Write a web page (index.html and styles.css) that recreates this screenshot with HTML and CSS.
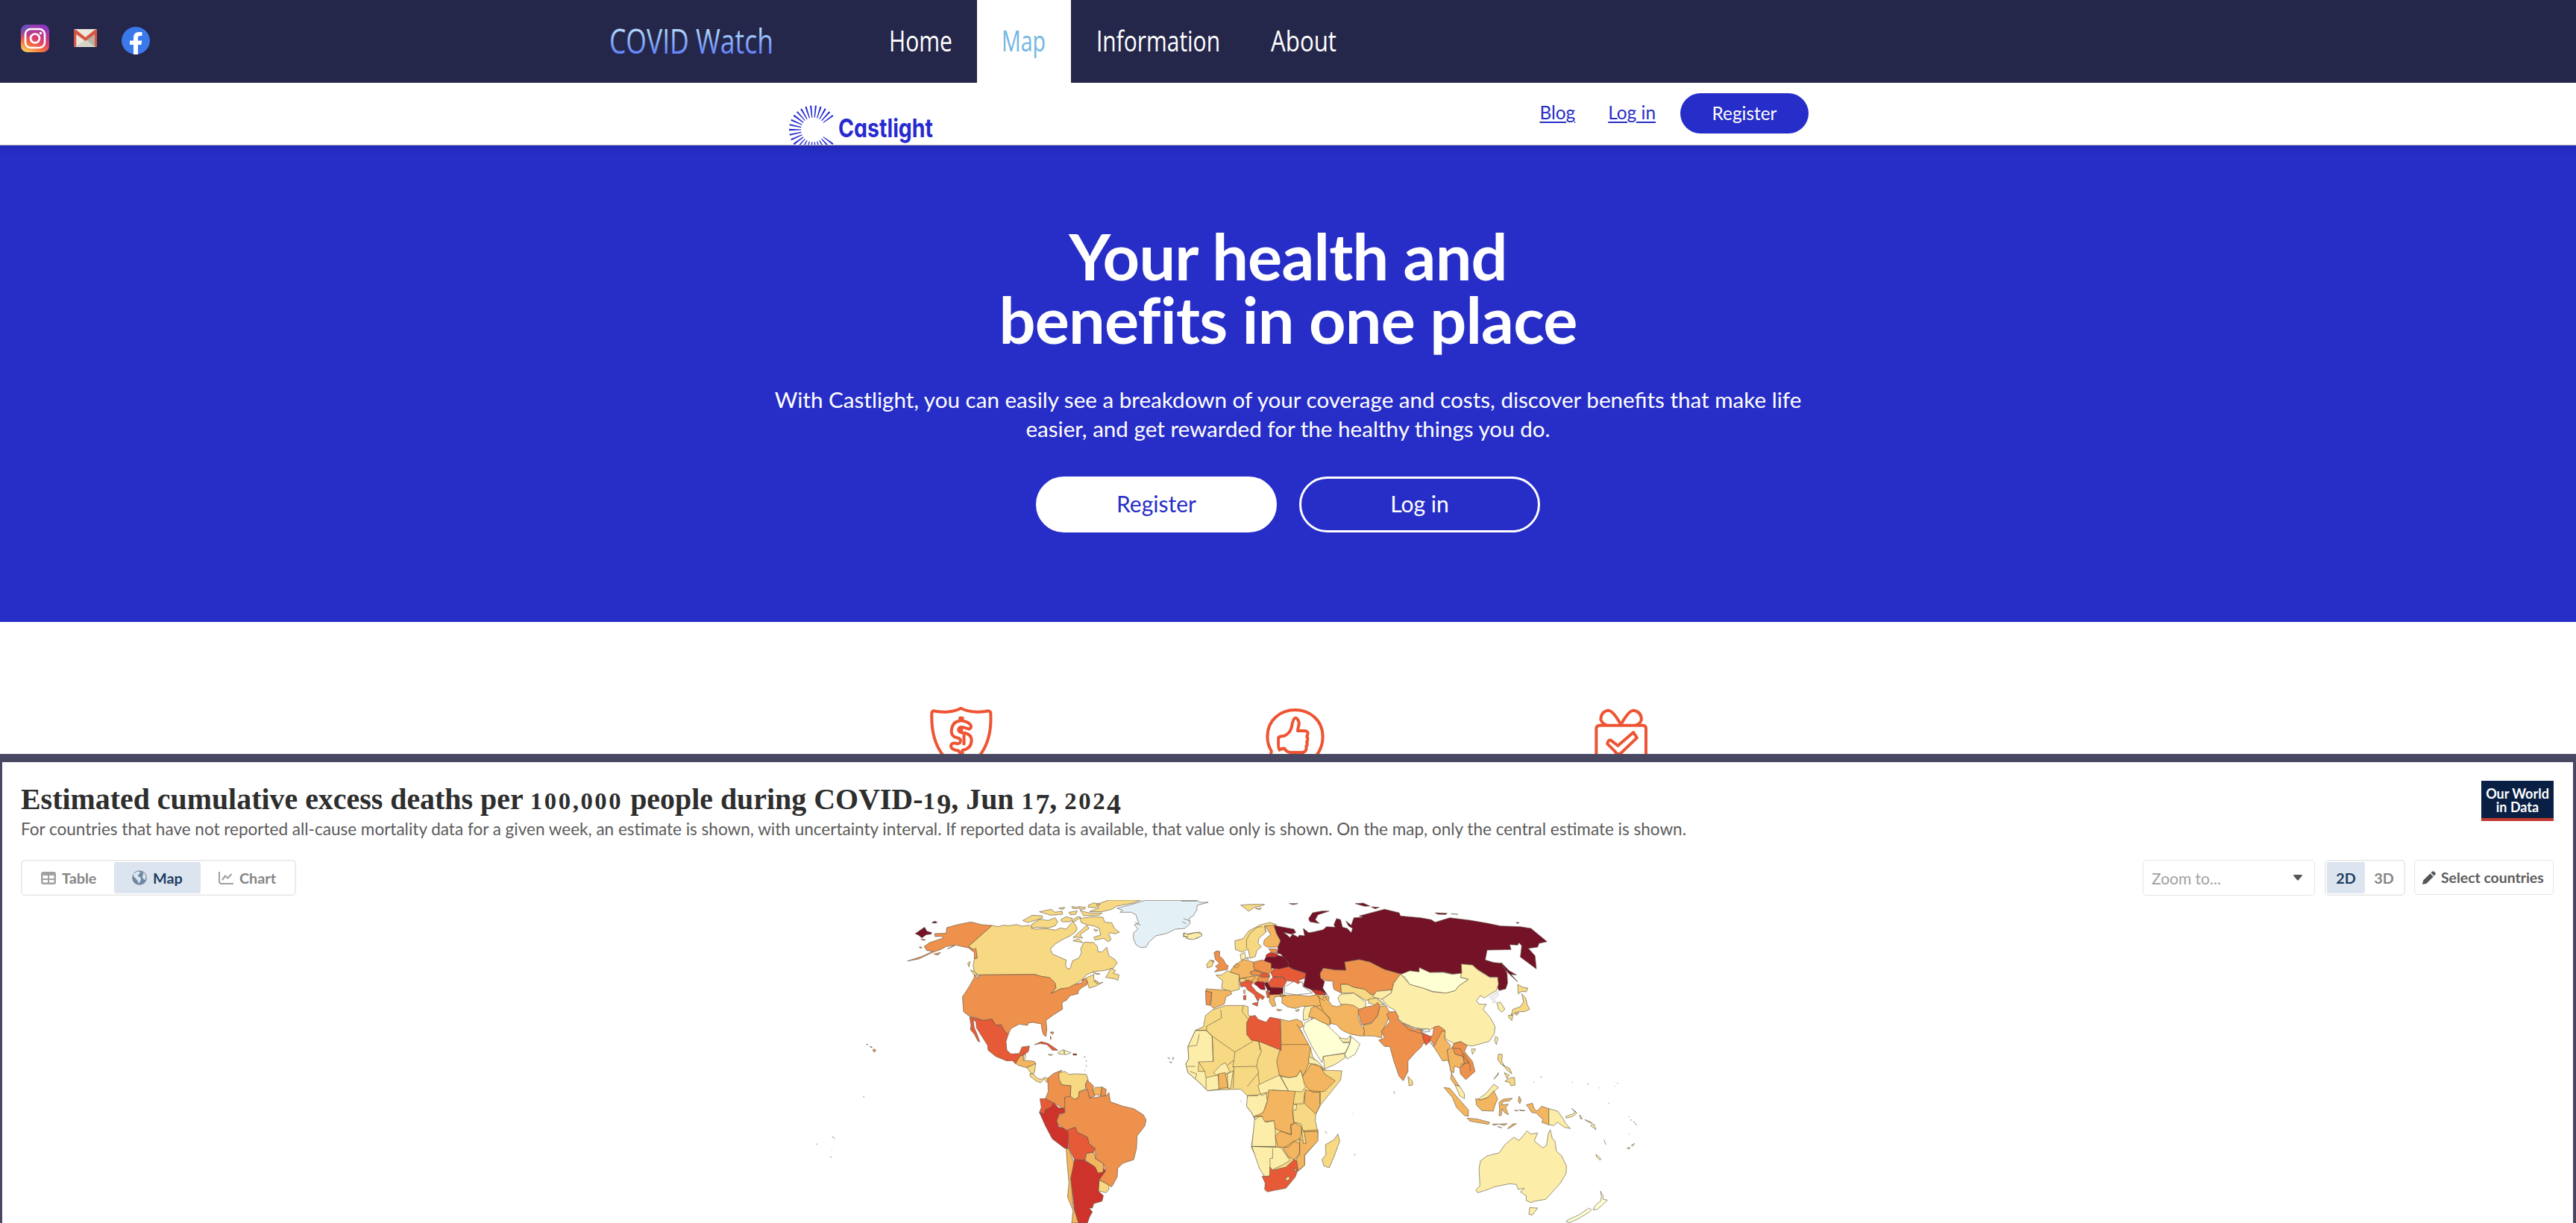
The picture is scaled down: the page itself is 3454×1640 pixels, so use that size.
FILE: index.html
```html
<!DOCTYPE html>
<html lang="en">
<head>
<meta charset="utf-8">
<title>COVID Watch</title>
<link rel="stylesheet" href="styles.css">
</head>
<body>
<header class="topbar">
  <div class="social">
    <svg class="ig" viewBox="0 0 38 37">
      <defs>
        <linearGradient id="igBase" x1="0.2" y1="1" x2="0.7" y2="0"><stop offset="0" stop-color="#fbd45f"/><stop offset="0.25" stop-color="#f7703d"/><stop offset="0.55" stop-color="#d93a72"/><stop offset="1" stop-color="#8a38c4"/></linearGradient>
        <radialGradient id="igBlue" cx="0" cy="0" r="0.55"><stop offset="0" stop-color="#3f62d8"/><stop offset="1" stop-color="#5a48d0" stop-opacity="0"/></radialGradient>
      </defs>
      <rect width="38" height="37" rx="8.5" fill="url(#igBase)"/><rect width="38" height="37" rx="8.5" fill="url(#igBlue)"/>
      <rect x="6" y="6" width="26" height="25" rx="7" fill="none" stroke="#fff" stroke-width="2.6"/>
      <circle cx="19" cy="18.5" r="6" fill="none" stroke="#fff" stroke-width="2.7"/><circle cx="26.5" cy="11.5" r="1.8" fill="#fff"/>
    </svg>
    <svg class="gm" viewBox="0 0 31 24">
      <rect width="31" height="24" rx="2" fill="#ebe8dc"/>
      <path d="M15.500 14L28 23H3Z" fill="#d5d3c5"/><path d="M16 14L28 4V23.500Z" fill="#b6b4a5"/>
      <path d="M0 2Q0 0 3 1L15.500 11 28 1Q31 0 31 2V22Q31 23.500 28 23.500V7L15.500 16 3.200 7V23.500Q0 23.500 0 22Z" fill="#d65547"/>
    </svg>
    <svg class="fb" viewBox="0 0 38 37">
      <ellipse cx="19" cy="18.500" rx="19" ry="18.500" fill="#3b78ea"/>
      <path d="M16 37V24H11V18.500H16V15Q16 7 23 7H27.500V12H24.500Q22 12 22 15V18.500H27.300L26.400 24H22V37Z" fill="#fff"/>
    </svg>
  </div>
  <svg class="brand" width="230" height="80" viewBox="812 15 230 80">
    <defs><linearGradient id="brandInk" x1="0" y1="38" x2="0" y2="73" gradientUnits="userSpaceOnUse"><stop offset="0" stop-color="#b5dcf8"/><stop offset="1" stop-color="#5f80fa"/></linearGradient></defs>
    <text x="817" y="72" textLength="220" lengthAdjust="spacingAndGlyphs" fill="url(#brandInk)">COVID Watch</text>
  </svg>
  <nav class="tabs">
    <a><svg width="90" height="70"><text x="1" y="49" textLength="85" lengthAdjust="spacingAndGlyphs">Home</text></svg></a>
    <a class="on"><svg width="64" height="70"><text x="2" y="49" textLength="59" lengthAdjust="spacingAndGlyphs">Map</text></svg></a>
    <a><svg width="172" height="70"><text x="3" y="49" textLength="166" lengthAdjust="spacingAndGlyphs">Information</text></svg></a>
    <a><svg width="94" height="70"><text x="3" y="49" textLength="88" lengthAdjust="spacingAndGlyphs">About</text></svg></a>
  </nav>
</header>

<section class="castlight">
  <div class="castbar">
    <svg class="castlogo" width="200" height="83" viewBox="1055 111 200 83">
      <clipPath id="burst"><rect x="1055" y="111" width="90" height="83"/></clipPath>
      <g clip-path="url(#burst)"><path class="rays" transform="translate(1090.500 174)" pathLength="292" d="M20.310 13.700A24.500 24.500 0 1 1 20.310 -13.700"/></g>
      <text x="1124" y="183.500" textLength="127" lengthAdjust="spacingAndGlyphs">Castlight</text>
    </svg>
    <div class="castlinks"><a>Blog</a><a>Log in</a><a class="reg">Register</a></div>
  </div>
  <div class="hero">
    <h1>Your health and<br>benefits in one place</h1>
    <p>With Castlight, you can easily see a breakdown of your coverage and costs, discover benefits that make life<br>easier, and get rewarded for the healthy things you do.</p>
    <div class="cta"><a class="solid">Register</a><a>Log in</a></div>
  </div>
  <div class="features">
    <svg viewBox="68 0 126 273" preserveAspectRatio="none"><path d="M131 89Q120 103 100 104Q88 105 76 100Q73 102 73 110Q71 220 98 285H166Q193 220 190 110Q190 102 186 100Q174 105 162 104Q142 103 131 89Z"/><path d="M129 128V140Q113 142 112 182Q112 202 122 207Q129 210 130 216Q131 234 122 231Q112 226 111 240Q111 253 121 258Q129 259 129 272H134V258Q152 252 152 216Q151 194 139 189Q126 188 126 176Q127 161 136 166L147 173Q153 169 150 156Q145 142 134 140V128ZM132 162V188M137 190V238"/></svg>
    <svg viewBox="734 0 120 273" preserveAspectRatio="none"><path d="M745 285L747 262Q739 235 739 205C739 60 849 60 849 205Q849 250 834 285"/><path d="M787 166Q790 128 794 128Q800 128 802 150L799 180H813Q821 182 819 195Q816 204 819 209Q820 218 817 226Q820 235 816 242Q818 262 810 267H784Q776 264 773 251Q768 250 763 257Q760 252 761 207Q765 200 773 200Q784 190 787 166Z"/></svg>
    <svg viewBox="1386 0 110 273" preserveAspectRatio="none"><path d="M1391 285V170Q1391 160 1397 158H1485Q1490 160 1490 170V285M1440 155Q1424 96 1414 98Q1400 104 1400 135Q1404 155 1412 157M1440 155Q1456 96 1466 98Q1481 104 1481 135Q1478 155 1469 157"/><path d="M1413 232Q1415 214 1420 218L1434 240L1465 186L1472 208L1440 270Q1434 280 1428 262Z"/></svg>
  </div>
</section>

<section class="owid">
  <div class="head">
    <div>
      <svg class="title" width="1490" height="46" viewBox="28 1048 1490 46">
        <text x="28" y="1085" textLength="1475" lengthAdjust="spacingAndGlyphs">Estimated cumulative excess deaths per <tspan class="os">100,000</tspan> people during COVID-<tspan class="os">1</tspan><tspan class="osd" dy="6">9</tspan><tspan dy="-6">, Jun </tspan><tspan class="os">1</tspan><tspan class="osd" dy="6">7</tspan><tspan dy="-6">, </tspan><tspan class="os">202</tspan><tspan class="osd" dy="6">4</tspan></text>
      </svg>
      <p class="sub">For countries that have not reported all-cause mortality data for a given week, an estimate is shown, with uncertainty interval. If reported data is available, that value only is shown. On the map, only the central estimate is shown.</p>
    </div>
    <div class="logo">Our World<br>in Data</div>
  </div>
  <div class="controls">
    <div class="seg views">
      <a class="t1"><svg width="20" height="17"><rect width="20" height="17" rx="3" fill="#a1a1a1"/><path d="M2.500 5H9V9H2.500ZM11 5H17.500V9H11ZM2.500 11H9V14.500H2.500ZM11 11H17.500V14.500H11Z" fill="#fff"/></svg>Table</a>
      <a class="t2 on"><svg width="20" height="20"><circle cx="10" cy="10" r="9.800" fill="#6e87a3"/><path d="M2 4.500L7.500 1.500 11 2 10 5 7.500 7 8.500 8 12 10.500 11.500 14 9 18 7.500 14 5 11 2 8ZM14 3L17 4 18.500 8 18 13 15 11.500 13.500 8 15.500 6Z" fill="#dce5ef"/></svg>Map</a>
      <a class="t3"><svg width="20" height="17"><path d="M1 0V13Q1 16 4 16H20" fill="none" stroke="#a1a1a1" stroke-width="2"/><path d="M5 11L9 5.500 12.500 8.500 17.500 3" fill="none" stroke="#a1a1a1" stroke-width="2.200"/></svg>Chart</a>
    </div>
    <div class="right">
      <div class="zoomto"><span>Zoom to...</span><svg width="12" height="8"><path d="M0 1Q0 0 1 0H11Q12 0 12 1L7 7Q6 8 5 7Z" fill="#555"/></svg></div>
      <div class="seg dims"><a class="on">2D</a><a>3D</a></div>
      <div class="pick"><svg width="18" height="18"><path d="M0 18L1.200 12.500 10.500 3.200 14.800 7.500 5.500 16.800ZM11.500 2.200L13 .7Q14.500 -.5 16 1L17 2Q18.500 3.500 17.200 5L15.800 6.500Z" fill="#555"/></svg>Select countries</div>
    </div>
  </div>
  <svg class="map" width="1220" height="433" viewBox="1080 1207 1220 433">
    <!-- Americas -->
    <g transform="translate(1080 1190) scale(.36990 .33333)">
      <path class="c" d="M676 153L700 158 716 152 740 154 765 149 785 156 812 152 830 168 870 165 905 172 925 163 945 168 958 150 970 138 978 150 985 165 978 180 960 195 935 208 905 228 888 248 895 268 920 280 945 292 943 315 950 328 960 325 968 295 990 285 1000 265 998 245 1010 220 1045 222 1058 238 1060 258 1075 260 1092 240 1100 275 1122 290 1130 305 1115 325 1080 335 1045 338 1018 352 1002 372 1025 360 1045 350 1045 368 1062 385 1078 382 1050 398 1028 405 1022 378 1005 370 985 385 955 405 925 408 890 427 908 405 905 385 885 365 855 358 830 350 628 352 612 340 608 315 612 290 620 270 610 250 590 238Z"/>
      <path class="c" d="M788 133L822 112 858 114 860 122 835 132 805 141ZM820 148L850 128 880 133 905 122 915 138 905 155 880 163 835 160 820 165ZM848 98L890 88 905 100 930 95 932 108 890 112ZM918 84L940 80 935 88ZM925 130L945 118 968 125 960 138 930 138ZM955 100L985 95 980 108 960 110ZM965 77L988 80 985 86 968 84ZM995 90L1010 98 1035 103 1075 103 1065 112 1008 114ZM1025 72L1045 62 1068 68 1052 82 1025 80ZM1055 68L1100 51H1215L1190 62 1155 70 1130 75 1110 88 1075 98 1030 97 1062 84ZM990 77L1015 80 1012 88 992 86ZM965 135L985 118 998 120 975 138ZM995 125L1040 118 1078 120 1085 140 1110 142 1120 165 1138 180 1122 187 1105 182 1100 190 1108 210 1098 218 1080 205 1050 212 1045 200 1070 192 1065 165 1045 155 1020 150 1000 142ZM1045 168L1060 172 1052 178ZM970 202L1020 152 1028 165 995 190 1005 205 988 200ZM970 215L990 206 1005 222ZM1088 362L1108 325 1125 335 1115 345 1137 352 1132 374 1122 368 1105 365ZM1042 342L1068 348 1055 350ZM1045 376L1060 378 1058 388ZM598 332L615 340 625 358 612 352ZM588 305L597 298 593 320Z"/>
      <path class="e" d="M612 350L625 368 628 352 830 350 855 358 885 362 905 385 908 405 890 427 925 408 955 403 975 390 1000 385 1005 372 1018 368 1022 378 1020 392 1003 402 990 415 988 428 960 435 945 455 933 460 930 468 932 490 900 512 872 535 875 570 872 600 862 592 855 560 856 550 848 548 825 543 808 545 805 555 775 550 745 568 735 592 720 575 710 552 690 555 675 530 645 535 605 520 590 515 573 500 569 440 590 405 612 362ZM676 153L590 238 610 250 618 245 623 285 612 288 612 262 590 243 568 238 545 232 515 247 540 232 510 238 490 250 460 262 410 288 370 296 420 278 462 257 440 254 430 238 450 222 498 204 495 196 470 198 468 186 510 184 512 162 550 150 600 139 640 150ZM466 268L490 262 480 272ZM412 240L422 240 418 246ZM418 208L435 210 430 214ZM244 653L250 650 256 657 248 662ZM222 630L226 632 224 635ZM234 639L242 643 238 645Z"/>
      <path class="i" d="M398 186L432 160 440 176 458 182 455 188 438 190 422 203 410 192ZM458 142L468 136 478 140 470 144Z"/>
      <path class="n" d="M1130 84L1190 66 1230 52H1420L1430 60 1460 60 1420 72 1418 92 1405 115 1390 125 1395 145 1375 165 1340 168 1310 185 1270 195 1245 220 1235 240 1215 242 1198 230 1188 205 1190 182 1205 168 1192 150 1208 145 1198 110 1180 100 1140 100 1150 92Z"/>
      <path class="l" d="M1362 55H1420M1370 125L1395 135M1380 145L1365 138M1195 140L1215 152"/>
      <path class="b" d="M1370 183L1380 188 1410 182 1430 180 1437 190 1420 205 1390 208 1382 200 1370 198Z"/>
      <path class="f" d="M595 520L645 535 677 530 690 555 708 552 720 575 735 592 727 620 730 655 745 670 775 668 785 642 812 638 808 660 790 675 775 680 772 700 762 710 750 697 730 698 690 680 662 655 660 635 640 600 620 565 618 540 608 533 612 565 622 590 632 622 625 618 612 590 598 572 600 555ZM830 633L855 620 880 628 915 655 895 655 875 632 850 628ZM850 850L872 850 900 867 890 885 870 895 866 912 848 905 855 885Z"/>
      <path class="d" d="M762 708L778 678 790 675 790 695 830 700 835 710 808 722 800 725 770 715ZM1050 805L1075 803 1070 838 1045 832 1042 815ZM945 1052L955 1050 970 1098 975 1115 962 1170 970 1280 990 1350H965L970 1300 950 1245 955 1190 948 1100ZM1018 1070L1045 1065 1052 1092 1080 1110 1080 1145 1060 1150 1050 1125 1015 1098Z"/>
      <path class="b" d="M790 672L798 672 796 690 790 695ZM915 665L935 652 940 672 918 670Z"/>
      <path class="a" d="M938 655L962 665 948 672 940 672Z"/><path class="h" d="M970 669L984 670 982 675 970 674Z"/>
      <path class="c" d="M802 725L835 708 830 745 820 750ZM814 748L828 752 840 768 855 772 868 764 880 770 875 785 866 770 852 786 835 778 814 760ZM880 672L896 672 888 677ZM918 745L940 740 955 752 980 750 1018 752 1025 775 1015 792 1015 812 992 822 990 845 975 853 960 840 962 798 930 795 915 770ZM1065 1178L1100 1195 1100 1215 1090 1228 1060 1220Z"/>
      <path class="e" d="M878 768L900 748 930 735 918 750 920 775 930 795 962 798 960 845 940 845 945 885 935 890 905 870 870 850 880 820ZM1022 775L1045 800 1040 815 1050 838 1030 848 1022 820 1015 795ZM1075 803L1090 812 1088 838 1070 838ZM888 582L900 582 896 592ZM888 598L892 608 888 612Z"/>
      <path class="e" d="M940 845L960 840 975 853 990 845 992 822 1022 812 1030 848 1090 838 1100 825 1105 862 1150 880 1190 890 1225 915 1235 935 1230 960 1202 1000 1200 1050 1190 1095 1150 1110 1132 1130 1130 1165 1110 1205 1065 1175 1088 1140 1080 1110 1052 1092 1050 1050 1028 1032 1022 1005 985 985 978 965 945 978 912 950 910 930 925 912 940 905Z"/>
      <path class="f" d="M945 978L978 965 985 985 1022 1005 1028 1032 1050 1050 1045 1065 1018 1070 1012 1098 975 1095 955 1050 952 1000Z"/>
      <path class="g" d="M848 905L866 912 870 895 890 885 900 867 918 887 938 888 940 905 920 912 910 940 918 962 938 970 952 985 952 1050 940 1050 895 1012 870 960ZM975 1095L1012 1098 1050 1125 1060 1150 1080 1145 1080 1130 1088 1140 1065 1175 1062 1222 1080 1240 1075 1262 1045 1272 1040 1290 1028 1290 1040 1305 1030 1325 1022 1350H990L975 1295 962 1170Z"/>
      <path class="l" d="M1008 680L1016 684M1018 695V702M1016 715L1020 722M1014 735L1010 738M1316 683L1322 690M1333 683V693M1320 702L1330 705M96 1002L107 1010M40 1030L42 1036M208 842L214 844M90 1085H96M96 1056V1058M885 588L894 580"/>
    </g>
    <!-- Europe, Africa, Asia, Oceania -->
    <g transform="translate(1560 1190) scale(.35714 .33333)">
      <path class="c" d="M290 71L335 68 380 68 365 76 345 78 320 96ZM345 84L368 84 360 90ZM268 215L300 205 320 175 365 150 400 141 425 150 410 158 380 155 385 180 358 205 355 225 368 238 350 255 345 278 325 285 318 248 295 260 270 250Z"/>
      <path class="l" d="M312 245L312 210 325 185 352 160 372 158M385 180L380 158"/>
      <path class="d" d="M382 155L415 152 425 185 440 215 430 240 390 240 376 230 378 212 402 190Z"/>
      <path class="e" d="M395 246L425 248 428 265 405 262ZM190 262L200 255 212 258 210 275 225 290 235 310 243 315 240 330 192 340 205 325 195 318 210 305 195 290ZM178 293L190 295 187 302Z"/>
      <path class="b" d="M288 270L305 262 310 285 292 293ZM310 285L320 282 318 290ZM80 182L92 190 120 182 142 184 144 195 110 210 85 205 92 198 76 197Z"/>
      <path class="c" d="M162 310L175 292 188 300 182 318 165 324ZM197 353L218 352 240 335 255 342 285 352 283 375 285 410 250 420 218 405 222 375ZM300 415L307 412 306 428 301 426Z"/>
      <path class="e" d="M158 415L182 422 175 475 160 472Z"/>
      <path class="d" d="M160 408L250 415 257 428 235 440 228 470 198 482 188 487 178 476 182 422 162 418ZM258 325L285 300 300 290 338 300 342 335 325 345 345 362 330 378 285 370 285 352 250 340ZM320 360L362 352 358 378 335 385 305 372 285 380 285 368ZM262 318L275 305 285 312 275 325Z"/>
      <path class="c" d="M285 368L308 366 310 378 290 384Z"/>
      <path class="e" d="M340 300L370 292 405 302 408 340 392 348 345 335 338 318ZM325 340L350 332 375 345 362 355 330 350ZM360 358L400 358 390 380 362 382 352 370Z"/>
      <path class="g" d="M385 272L400 262 428 268 432 280 415 285 385 280ZM555 412L590 415 605 430 572 428Z"/>
      <path class="f" d="M362 352L380 343 400 352 395 360 370 362ZM404 345L415 325 470 318 485 328 535 345 530 365 505 375 525 388 495 400 485 378 460 375 448 358 410 360ZM390 385L412 360 450 360 462 380 450 402 415 405 402 400ZM287 385L318 373 335 380 330 395 350 420 380 440 372 452 362 442 355 460 340 430 315 412 308 398 290 400ZM333 467L355 462 353 478 335 470ZM300 436L310 434 309 452 301 452ZM385 418L395 415 400 440 390 445Z"/>
      <path class="h" d="M340 388L352 378 378 382 382 412 365 410 350 395Z"/>
      <path class="i" d="M378 385L390 382 402 402 450 404 448 428 430 432 400 432 390 412ZM378 295L385 280 420 280 430 273 455 280 468 300 472 318 435 328 405 325 405 305Z"/>
      <path class="c" d="M390 415L400 415 398 425ZM495 495L510 490 505 500Z"/>
      <path class="d" d="M398 432L440 430 440 438 420 440 415 450 422 475 410 480 398 460ZM425 490L445 493 430 497ZM440 425L460 435 440 440ZM445 435L500 432 545 438 582 430 605 430 600 445 615 435 622 440 620 455 632 475 652 480 685 465 720 475 735 490 730 520 740 550 755 575 752 597 740 598 702 590 680 580 665 570 650 552 628 548 612 550 590 540 568 518 555 530 565 490 570 478 520 478 495 487 465 480 445 465Z"/>
      <path class="g" d="M555 412L590 414 610 432 572 430Z"/>
      <path class="l" d="M582 430L590 475 600 500 625 525 628 548M570 478L590 475M572 430L585 445 605 455M605 430L615 455"/>
      <path class="i" d="M415 153L440 158 490 168 497 182 480 188 450 180 465 192 475 202 485 188 505 200 510 192 530 195 525 165 545 182 560 180 600 170 612 158 645 160 640 150 650 125 665 130 672 160 690 165 705 182 710 165 695 155 685 135 705 152 715 122 750 120 735 115 770 105 830 88 885 102 890 115 920 118 965 122 1005 130 1020 140 1075 122 1150 132 1220 145 1265 155 1340 158 1380 165 1408 190 1440 218 1410 225 1405 240 1370 245 1395 275 1400 328 1340 280 1345 235 1335 222 1330 232 1300 230 1305 250 1215 252 1208 292 1240 302 1270 305 1290 345 1292 385 1285 408 1260 415 1250 390 1255 360 1225 360 1180 330 1160 312 1120 308 1120 345 1085 348 1050 340 1000 342 960 340 890 348 830 330 775 300 735 290 680 300 685 333 645 332 600 325 588 345 590 365 605 378 598 405 615 432 590 415 555 412 525 398 530 375 535 345 485 328 470 318 468 300 440 268 428 265 430 240 440 215 425 185ZM545 125L560 102 595 95 622 95 580 110 570 130 585 145 550 138ZM720 65L750 63 775 75 755 76ZM780 78L810 80 795 86ZM1020 102L1065 104 1060 109 1030 108ZM1080 106L1105 108ZM1268 302L1298 335 1325 352 1305 350 1330 380 1300 350 1278 325ZM472 65L505 65 488 69ZM1325 140L1336 142 1328 145Z"/>
      <path class="e" d="M588 345L605 325 645 332 685 333 680 300 735 290 775 300 830 330 890 348 882 370 862 385 865 410 830 415 800 425 780 432 755 410 715 402 690 390 665 390 668 425 640 410 635 385 640 378 610 375 590 365Z"/>
      <path class="w" d="M520 378L505 388 490 378 455 400 455 425 500 432 560 425 525 400Z"/>
      <path class="c" d="M665 390L690 390 715 402 755 410 780 432 812 430 800 445 830 470 800 472 788 468 778 450 760 455 715 425 668 425Z"/>
      <path class="b" d="M665 430L715 425 760 462 758 485 735 490 715 475 690 470 665 470 655 445ZM800 418L858 412 855 425 820 450 785 440ZM530 480L565 475 565 505 545 530 525 535 525 500Z"/>
      <path class="c" d="M770 450L800 445 830 470 800 475 770 465Z"/>
      <path class="b" d="M890 348L925 390 975 405 1010 420 1060 425 1095 415 1110 395 1145 370 1110 360 1120 345 1118 308 1160 312 1180 332 1225 362 1255 362 1258 390 1250 415 1232 425 1205 445 1190 435 1175 455 1185 470 1212 470 1200 490 1228 525 1245 560 1242 590 1222 620 1160 638 1140 635 1115 620 1090 628 1060 610 1050 580 1028 558 1000 572 945 565 900 545 878 525 870 495 845 480 820 450 855 425 865 385ZM1157 650L1172 650 1160 672ZM1247 600L1256 605 1250 632 1243 618ZM1252 465L1265 462 1282 490 1270 502 1258 490Z"/>
      <path class="a" d="M890 350L925 335 960 340 960 322 1000 342 1050 342 1085 350 1118 345 1115 362 1145 370 1110 395 1095 415 1060 425 1010 418 975 405 925 390 905 360Z"/>
      <path class="z" d="M1222 440L1255 418 1258 435 1240 452 1252 460 1238 466 1232 450Z"/>
      <path class="c" d="M1330 390L1350 402 1368 405 1362 420 1345 418 1332 428ZM1345 428L1360 445 1365 470 1375 490 1355 500 1330 500 1305 515 1312 490 1340 480 1352 460ZM1295 515L1312 512 1308 536 1298 525ZM1320 505L1335 505 1325 515Z"/>
      <path class="e" d="M730 495L755 482 790 475 805 463 812 480 805 515 780 545 745 553 738 530Z"/>
      <path class="d" d="M755 582L750 553 780 548 805 515 812 480 835 475 850 505 840 540 820 580 820 605 790 598 752 597Z"/>
      <path class="e" d="M850 500L872 500 882 520 880 530 900 550 945 572 970 572 972 585 1002 605 1012 590 1015 562 1035 557 1058 575 1045 600 1030 630 1018 640 1005 615 972 630 970 640 945 665 918 698 918 740 900 778 885 760 865 700 850 640 830 640 808 615 830 605 818 578 850 540 838 510Z"/>
      <path class="l" d="M897 545L940 565 970 572 968 588 920 572ZM972 585L1000 600"/>
      <path class="n" d="M972 572L995 568 1000 580 978 582Z"/><path class="f" d="M972 586L1005 600 1000 620 1015 642 1000 620 985 635 975 610Z"/>
      <path class="d" d="M1045 578L1058 580 1055 608 1080 638 1065 655 1075 690 1088 720 1082 750 1105 790 1112 800 1095 795 1078 770 1082 740 1068 695 1048 698 1035 675 1015 642 1030 610Z"/>
      <path class="d" d="M1065 655L1090 640 1095 670 1125 680 1130 710 1112 725 1092 720 1090 745 1078 740Z"/>
      <path class="e" d="M1090 628L1115 620 1140 635 1130 660 1160 700 1170 740 1135 773 1115 750 1112 725 1130 710 1125 680 1095 670 1085 645Z"/><path class="l" d="M1115 650L1130 690 1150 710 1152 740M1125 665L1148 705 1115 712M1085 645L1115 650"/>
      <path class="c" d="M918 760L935 780 935 795 922 798Z"/>
      <path class="a" d="M530 545L568 525 612 550 640 580 665 605 675 625 700 625 685 665 600 680 595 705 560 645 525 570ZM700 628L705 600 738 630 720 670 690 690 680 670Z"/>
      <path class="b" d="M600 680L680 668 682 685 645 712 605 730ZM660 605L690 610 702 595 700 622 672 622ZM1095 795L1112 800 1130 830 1130 850 1112 838ZM1180 852L1210 830 1240 792 1258 805 1240 822 1218 845 1190 855Z"/>
      <path class="d" d="M555 485L570 478 600 500 625 530 625 555 590 540 565 525 545 520Z"/>
      <path class="c" d="M158 515L185 492 235 475 300 475 318 480 318 510 328 525 355 615 430 650 552 645 560 680 600 735 670 738 665 775 620 835 590 875 572 912 570 938 580 985 578 1020 530 1080 530 1118 508 1140 400 1140 350 1090 330 1045 345 935 330 905 315 885 315 838 290 812 265 812 200 815 165 818 140 790 92 745 84 710 95 690 92 640 120 575 150 560Z"/>
      <path class="b" d="M120 575L160 575 183 600 187 700 132 702 130 740 155 740 160 765 205 755 210 812 165 818 140 790 92 745 84 710 95 690 92 640ZM188 745L215 715 232 705 250 742 235 750 200 755ZM240 750L262 738 252 808 242 808ZM355 795L435 755 470 820 410 815 368 838 360 820ZM440 760L470 765 500 760 515 735 535 800 520 822 470 820ZM315 838L355 835 385 825 390 860 375 905 345 935 330 905 312 880ZM343 922L375 922 385 945 418 938 422 1045 332 1042ZM332 1042L440 1045 475 1098 450 1115 410 1135 398 1162 378 1162 360 1130ZM483 870L500 875 498 895 483 895ZM545 680L580 700 608 735 575 712 545 708Z"/>
      <path class="f" d="M325 518L345 515 355 530 385 542 400 522 438 530 442 655 360 620 330 615 313 592 312 545Z"/>
      <path class="d" d="M440 530L470 538 500 530 520 540 525 560 510 565 552 645 545 690 545 710 530 745 522 760 515 735 500 760 470 765 435 755 425 700 435 660 442 655ZM555 710L590 720 605 750 645 778 605 820 560 825 530 795 522 760 540 735ZM532 815L588 822 588 875 572 912 530 870ZM395 815L495 820 490 850 485 900 490 950 478 955 480 995 440 980 420 970 415 938 380 942 370 920 340 922 375 905 390 860ZM420 1000L440 980 480 995 478 955 495 948 520 965 515 1010 490 1022 470 1045 430 1045ZM450 1050L490 1020 512 1030 510 1075 490 1095 470 1085ZM518 980L580 975 580 1020 530 1075 530 1118 505 1140 498 1095 512 1070 510 1010 535 1030ZM206 750L232 745 242 805 208 810Z"/>
      <path class="f" d="M370 1162L398 1162 400 1125 410 1138 460 1125 490 1095 500 1100 505 1135 495 1165 460 1210 420 1218 390 1225 380 1215 382 1190Z"/>
      <path class="c" d="M458 1170L470 1162 475 1172 462 1182ZM490 1130L500 1135 495 1145ZM595 1095L610 1075 608 1035 640 1015 655 992 662 1020 640 1085 622 1128 602 1120ZM518 970L528 980 535 1030 525 1030Z"/>
      <path class="l" d="M120 575H162L185 600 268 662 335 620M183 600L187 700M160 560L218 525 215 492M162 575V560M268 662L265 695 240 715M355 617L368 660 355 690 350 720 260 722 265 695M300 475L295 500 318 530M360 620L362 655M442 632H545M265 722L262 808M350 720L358 745 315 800M355 745L360 790M315 838H355M135 590L125 635 92 640M485 900L490 945 515 950 525 982H578M530 825L525 870 490 872M588 822V870M160 765V810M132 702L155 740M90 720H120M120 770L125 750 100 740M500 550L525 590M343 1042H422M410 1050V1090H400V1130M600 735L590 720M435 660L438 655"/>
      <path class="d" d="M1053 805L1075 808 1100 840 1125 870 1145 895 1145 920 1130 918 1100 885 1085 845ZM1140 928L1180 932 1225 945 1220 953 1150 940ZM1172 850L1190 855 1218 845 1240 818 1255 850 1245 875 1238 900 1195 898 1175 875ZM1260 865L1275 852 1310 848 1300 858 1275 862 1270 875 1295 872 1285 885 1295 915 1280 905 1272 890 1268 918 1260 918 1262 890ZM1335 840L1343 855 1338 870 1332 858ZM1318 897H1330V900ZM1335 895L1358 898 1340 898ZM1235 952H1258L1240 957ZM1260 952L1290 950 1280 958ZM1255 962L1270 967ZM1362 875L1385 868 1392 890 1402 900 1420 880 1447 890V955L1420 945 1425 935 1400 908 1382 905 1370 885ZM1292 970L1310 952 1325 950 1300 968Z"/>
      <path class="b" d="M1447 890L1480 900 1500 930 1510 950 1528 970 1505 965 1480 945 1465 958 1447 955ZM1510 922L1540 910 1545 900 1552 908 1535 922 1512 928ZM1532 890L1548 905"/>
      <path class="c" d="M1258 670L1272 672 1270 700 1280 718 1268 712 1255 692ZM1275 715L1300 728 1308 750 1295 740ZM1280 745L1298 755 1290 770ZM1282 780L1305 765 1318 765 1320 795 1305 798 1300 785ZM1240 772L1258 745 1256 755Z"/>
      <path class="b" d="M1452 975L1460 1010 1470 1020 1475 1060 1495 1080 1513 1120 1512 1150 1490 1190 1435 1255 1395 1262 1380 1268 1362 1260 1362 1240 1340 1225 1355 1210 1332 1215 1325 1195 1300 1192 1240 1205 1220 1215 1180 1228 1172 1218 1188 1200 1185 1130 1190 1100 1215 1080 1260 1068 1282 1035 1315 1005 1335 1018 1365 980 1380 992 1405 988 1392 1020 1425 1048 1438 1038 1445 990ZM1375 1288L1405 1290 1385 1318 1372 1315Z"/>
      <path class="l" d="M605 980L615 990M15 685L22 690M36 683V693M22 702L30 706M718 1072V1078M288 858L292 862M866 820V830M1390 784H1392M1418 762V764M710 910H712M1535 784H1537"/>
    </g>
    <!-- Pacific -->
    <g transform="translate(1900 1190) scale(.33333)">
      <path class="a" d="M738 1222L748 1240 748 1255 766 1258 745 1278 725 1295 708 1297 718 1278 738 1262 742 1245ZM692 1290L702 1297 690 1308 650 1332 615 1348 600 1345 605 1338 650 1318Z"/>
      <path class="b" d="M720 1074L740 1092 736 1097 722 1084ZM845 1048L857 1046 852 1054ZM862 1038L875 1030 868 1040ZM655 915L665 932 657 930ZM675 934L700 944 705 950 685 942ZM698 958L712 952 720 975Z"/>
      <path class="l" d="M752 1015L760 1035M622 888L640 905M468 784H471M499 760V764M625 784H627M684 790H690M733 805V808M793 801L796 800M805 788H809M770 868H774M852 922H855M858 936H864M870 940L884 958M852 993H855"/>
    </g>
  </svg>
</section>
</body>
</html>
```
FILE: styles.css
```css
* { box-sizing: border-box; }
body { margin: 0; width: 3454px; height: 1640px; overflow: hidden; background: #fff; font-family: Lato, "Liberation Sans", sans-serif; }
p, h1 { margin: 0; }
a { white-space: nowrap; }

.topbar { height: 111px; background: #25274a; display: flex; }
.social { display: flex; align-items: flex-start; width: 812px; padding: 33px 0 0 28px; }
.ig { width: 38px; height: 37px; margin-right: 33px; }
.gm { width: 31px; height: 24px; margin: 6px 33px 0 0; }
.fb { width: 38px; height: 37px; margin-top: 3px; }
.brand { margin-top: 15px; font: 400 46px "Open Sans", sans-serif; }
.tabs { display: flex; margin-left: 118px; font: 400 38px "Open Sans", sans-serif; fill: #fff; }
.tabs a { height: 111px; padding: 20px 31px 0; }
.tabs a.on { background: #fff; fill: #72b6e2; }
.tabs a:first-child { padding-right: 29px; }

.castlight { height: 900px; overflow: hidden; }
.castbar { height: 84px; border-bottom: 1px solid #b9b9b9; padding: 0 1029px 0 1055px; display: flex; justify-content: space-between; }
.castlogo { overflow: visible; }
.castlogo text { font: 700 34px Inter, sans-serif; font-feature-settings: "cv11"; fill: #262ad0; }
.rays { fill: none; stroke: #262ad0; stroke-width: 16; stroke-dasharray: 4 8; }
.castlinks { display: flex; align-items: center; height: 54px; margin-top: 14px; font-size: 24.4px; color: #262dc8; }
.castlinks a { margin-right: 44px; line-height: 32px; padding-bottom: 2px; text-decoration: underline; text-decoration-thickness: 2px; text-underline-offset: 3px; }
.castlinks a:nth-child(2) { margin-right: 33px; }
.castlinks .reg { margin: 0; width: 172px; height: 54px; line-height: 53px; border-radius: 27px; background: #262dc8; color: #fff; text-align: center; text-decoration: none; }
.hero { height: 639px; padding-top: 105px; background: linear-gradient(#2229b8, #272ec8 14px); color: #fff; text-align: center; display: flex; flex-direction: column; align-items: center; }
.hero h1 { font-size: 86.4px; line-height: 85px; font-weight: 700; letter-spacing: -.8px; }
.hero p { margin-top: 46px; font-size: 29.6px; line-height: 39px; white-space: nowrap; }
.cta { display: flex; gap: 30px; margin-top: 45px; }
.cta a { width: 323px; height: 75px; border: 3px solid #fff; border-radius: 38px; font-size: 30px; line-height: 66px; }
.cta .solid { background: #fff; color: #272ec8; }
.features { height: 177px; display: flex; padding: 86px 0 0 1246px; }
.features svg { height: 91px; fill: none; stroke: #ee5433; stroke-width: 4px; }
.features path { vector-effect: non-scaling-stroke; stroke-linejoin: round; }
.features svg:nth-child(1) { width: 85px; margin-right: 365px; }
.features svg:nth-child(2) { width: 81px; margin-right: 360px; }
.features svg:nth-child(3) { width: 74px; }

.owid { height: 629px; border: 0 solid #484863; border-width: 11px 4px 0 3px; overflow: hidden; background: #fff; }
.head { display: flex; justify-content: space-between; padding: 25px 26px 0 25px; height: 122px; }
.title { display: block; margin-top: 1px; overflow: visible; font: 700 39px "Liberation Serif", serif; fill: #2d2e2d; }
.os { font-size: 32px; letter-spacing: 2.5px; }
.osd { font-size: 37px; }
.sub { font-size: 22.52px; line-height: 30px; margin-top: 3px; color: #5b5b5b; white-space: nowrap; }
.logo { width: 97px; height: 54px; padding-top: 8px; background: #0a1f44; border-bottom: 4px solid #c0392f; color: #fff; font-size: 18px; line-height: 18px; font-weight: 700; text-align: center; }
.controls { display: flex; justify-content: space-between; margin-top: 9px; padding: 0 26px 0 25px; height: 54px; font-size: 19.8px; font-weight: 700; color: #858585; }
.seg { height: 48px; border: 1px solid #e5e5e5; border-radius: 5px; box-shadow: inset 0 0 0 1px #f2f2f2; padding: 2px; display: flex; }
.seg a { display: flex; align-items: center; border-radius: 3px; }
.seg .on { background: #dce5ef; color: #1d3d63; }
.views { width: 369px; }
.views svg { margin-right: 8px; }
.views .t1 { width: 122px; padding-left: 24px; }
.views .t2 { width: 116px; padding-left: 24px; }
.views .t3 { padding-left: 24px; }
.right { display: flex; }
.zoomto { width: 231px; height: 48px; border: 1px solid #e5e5e5; border-radius: 5px; display: flex; align-items: center; justify-content: space-between; padding: 0 16px 0 11px; font-weight: 400; font-size: 21px; color: #a1a1a1; margin-right: 13px; }
.dims { width: 108px; margin-right: 12px; }
.dims a { width: 51px; justify-content: center; }
.pick { width: 187px; height: 47px; border: 1px solid #e5e5e5; border-radius: 5px; display: flex; align-items: center; padding-left: 10px; gap: 7px; font-size: 19.4px; color: #5b5b5b; white-space: nowrap; }
.map { display: block; margin-left: 1077px; }
.map path { vector-effect: non-scaling-stroke; stroke: #5a5140; stroke-width: .6px; stroke-linejoin: round; }
.map .a { fill: #ffffd4; }
.map .b { fill: #fceda9; }
.map .c { fill: #f7d984; }
.map .d { fill: #f3b55f; }
.map .e { fill: #ed914d; }
.map .f { fill: #e75a38; }
.map .g { fill: #cd332a; }
.map .h { fill: #ad1b28; }
.map .i { fill: #741227; }
.map .n { fill: #e3f0f6; }
.map .w { fill: #fff; }
.map .z { fill: #eee; stroke: #ccc; }
.map .l { fill: none; }
```
